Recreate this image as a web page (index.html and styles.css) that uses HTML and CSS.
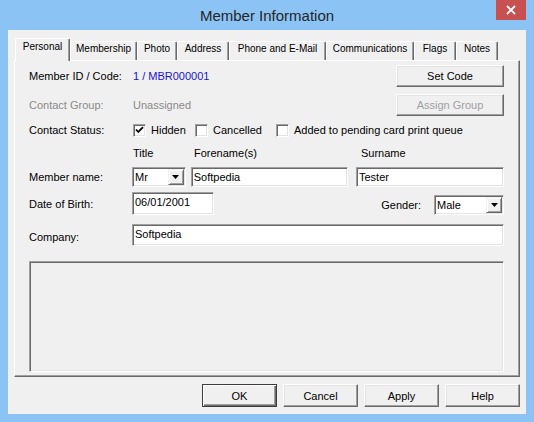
FILE: index.html
```html
<!DOCTYPE html>
<html lang="en">
<head>
    <meta charset="UTF-8">
    <title>Member Information</title>
    <link rel="stylesheet" href="styles.css">
</head>
<body>
    <div class="window">
        <div class="titlebar">
            <span class="titlebar__text">Member Information</span>
            <button class="titlebar__close" aria-label="Close">
                <svg width="10" height="10" viewBox="0 0 10 10"><path d="M1 1L9 9M9 1L1 9" stroke="#fff" stroke-width="1.8"/></svg>
            </button>
        </div>

        <div class="client">
            <div class="tabs">
                <div class="tab tab--active">Personal</div>
                <div class="tab">Membership</div>
                <div class="tab">Photo</div>
                <div class="tab">Address</div>
                <div class="tab">Phone and E-Mail</div>
                <div class="tab">Communications</div>
                <div class="tab">Flags</div>
                <div class="tab">Notes</div>
            </div>

            <div class="panel">
                <div class="row row--code">
                    <span class="label">Member ID / Code:</span>
                    <span class="value value--link">1 / MBR000001</span>
                    <button class="btn btn--side">Set Code</button>
                </div>

                <div class="row row--group">
                    <span class="label label--disabled">Contact Group:</span>
                    <span class="value value--disabled">Unassigned</span>
                    <button class="btn btn--side" disabled>Assign Group</button>
                </div>

                <div class="row row--status">
                    <span class="label">Contact Status:</span>
                    <label class="check check--hidden">
                        <span class="check__box">
                            <svg width="9" height="9" viewBox="0 0 9 9"><path d="M1 3.5L3.3 6L8 1.2" fill="none" stroke="#000" stroke-width="1.8"/></svg>
                        </span>
                        Hidden
                    </label>
                    <label class="check check--cancelled">
                        <span class="check__box"></span>
                        Cancelled
                    </label>
                    <label class="check">
                        <span class="check__box"></span>
                        Added to pending card print queue
                    </label>
                </div>

                <div class="row row--heads">
                    <span class="label"></span>
                    <span class="head head--title">Title</span>
                    <span class="head head--fore">Forename(s)</span>
                    <span class="head head--sur">Surname</span>
                </div>

                <div class="row row--name">
                    <span class="label">Member name:</span>
                    <div class="combo combo--title">
                        <span class="combo__value">Mr</span>
                        <span class="combo__btn">
                            <svg width="7" height="4" viewBox="0 0 7 4"><path d="M0 0H7L3.5 4Z"/></svg>
                        </span>
                    </div>
                    <input class="field field--fore" type="text" value="Softpedia">
                    <input class="field field--sur" type="text" value="Tester">
                </div>

                <div class="row row--dob">
                    <span class="label">Date of Birth:</span>
                    <input class="field field--date" type="text" value="06/01/2001">
                    <div class="gender">
                        <span class="gender__label">Gender:</span>
                        <div class="combo combo--gender">
                            <span class="combo__value">Male</span>
                            <span class="combo__btn">
                                <svg width="7" height="4" viewBox="0 0 7 4"><path d="M0 0H7L3.5 4Z"/></svg>
                            </span>
                        </div>
                    </div>
                </div>

                <div class="row row--company">
                    <span class="label label--company">Company:</span>
                    <input class="field field--company" type="text" value="Softpedia">
                </div>

                <div class="notes-box"></div>
            </div>

            <div class="actions">
                <button class="btn btn--action btn--default">OK</button>
                <button class="btn btn--action">Cancel</button>
                <button class="btn btn--action">Apply</button>
                <button class="btn btn--action">Help</button>
            </div>
        </div>
    </div>
</body>
</html>
```

FILE: styles.css
```css
* {
    margin: 0;
    padding: 0;
    box-sizing: border-box;
}

body {
    background-color: #8bc4f4;
    font-family: "Liberation Sans", Arial, sans-serif;
    font-size: 11px;
    color: #000;
}

.window {
    width: 534px;
    height: 422px;
    background-color: #8bc4f4;
    padding: 0 8px 8px;
}

/* Title bar */
.titlebar {
    height: 30px;
    display: grid;
    grid-template-columns: 1fr auto 1fr;
    align-items: start;
}

.titlebar__text {
    grid-column: 2;
    font-size: 15px;
    line-height: 31px;
    color: #262626;
}

.titlebar__close {
    grid-column: 3;
    justify-self: end;
    width: 30px;
    height: 20px;
    border: 0;
    background-color: #c75050;
    display: flex;
    justify-content: center;
    align-items: center;
}

/* Client area */
.client {
    height: 384px;
    background-color: #f0f0f0;
    padding: 8px 6px 0;
}

.tabs {
    display: flex;
    align-items: flex-end;
    height: 22px;
    padding-left: 1px;
    position: relative;
    z-index: 1;
}

.tab {
    height: 19px;
    border: 1px solid #fff;
    border-bottom: 0;
    border-right-color: #696969;
    border-radius: 2px 2px 0 0;
    box-shadow: inset -1px 0 #a0a0a0;
    background-color: #f0f0f0;
    font-size: 10px;
    line-height: 14px;
    text-align: center;
    white-space: nowrap;
}

.tab--active {
    height: 23px;
    margin-bottom: -1px;
    padding-top: 1px;
}

.tab:nth-child(1) { width: 55px; }
.tab:nth-child(2) { width: 67px; }
.tab:nth-child(3) { width: 40px; }
.tab:nth-child(4) { width: 52px; }
.tab:nth-child(5) { width: 97px; }
.tab:nth-child(6) { width: 88px; }
.tab:nth-child(7) { width: 42px; }
.tab:nth-child(8) { width: 42px; }

.panel {
    height: 317px;
    border: 1px solid;
    border-color: #fff #696969 #696969 #fff;
    box-shadow: inset -1px -1px #a0a0a0;
    padding: 4px 15px 4px 14px;
    display: flex;
    flex-direction: column;
}

/* Form rows */
.row {
    display: flex;
    align-items: center;
    flex: none;
}

.row--code { height: 22px; }
.row--group { height: 22px; margin-top: 7px; }
.row--status { height: 20px; margin-top: 4px; }
.row--heads { height: 14px; margin-top: 6px; }
.row--name { height: 20px; margin-top: 7px; }
.row--dob { height: 23px; margin-top: 5px; }
.row--company { height: 22px; margin-top: 9px; }

.label {
    width: 103px;
    flex: none;
}

.label--disabled,
.value--disabled {
    color: #8a8a8a;
}

.label--company {
    padding-top: 3px;
}

.value {
    padding-left: 1px;
}

.value--link {
    color: #1414d2;
}

/* Buttons */
.btn {
    font: inherit;
    color: #000;
    background-color: #f0f0f0;
    border: 1px solid;
    border-color: #fff #696969 #696969 #fff;
    box-shadow: inset -1px -1px #a0a0a0, inset 1px 1px #e3e3e3;
}

.btn:disabled {
    color: #a0a0a0;
}

.btn--side {
    width: 108px;
    height: 22px;
    margin-left: auto;
}

.btn--action {
    width: 75px;
    height: 23px;
}

.btn--default {
    border-color: #3c3c3c;
    box-shadow: inset 1px 1px #fff, inset -1px -1px #696969, inset -2px -2px #a0a0a0;
}

/* Checkboxes */
.check {
    display: flex;
    align-items: center;
    gap: 5px;
    margin-left: 1px;
    white-space: nowrap;
}

.check + .check {
    margin-left: 0;
}

.check--hidden { width: 62px; }
.check--cancelled { width: 81px; }

.check__box {
    width: 13px;
    height: 13px;
    flex: none;
    background-color: #fff;
    border: 1px solid;
    border-color: #a0a0a0 #fff #fff #a0a0a0;
    box-shadow: inset 1px 1px #696969, inset -1px -1px #e3e3e3;
    display: flex;
    justify-content: center;
    align-items: center;
}

/* Column headings */
.head--title { width: 59px; padding-left: 1px; }
.head--fore { width: 166px; padding-left: 3px; }
.head--sur { padding-left: 4px; }

/* Text fields */
.field {
    font: inherit;
    color: #000;
    height: 100%;
    background-color: #fff;
    border: 1px solid;
    border-color: #a0a0a0 #fff #fff #a0a0a0;
    box-shadow: inset 1px 1px #696969, inset -1px -1px #e3e3e3;
    padding: 0 2px;
    outline: none;
}

.field--fore { width: 158px; margin-left: 5px; }
.field--sur { flex: 1; margin-left: 8px; }
.field--date { width: 82px; padding-bottom: 4px; }
.field--company { flex: 1; padding-bottom: 2px; }

/* Combo boxes */
.combo {
    height: 20px;
    display: flex;
    background-color: #fff;
    border: 1px solid;
    border-color: #a0a0a0 #fff #fff #a0a0a0;
    box-shadow: inset 1px 1px #696969, inset -1px -1px #e3e3e3;
    padding: 1px;
}

.combo--title { width: 54px; }
.combo--gender { width: 70px; }

.combo__value {
    flex: 1;
    padding-left: 1px;
    line-height: 16px;
}

.combo__btn {
    width: 16px;
    height: 16px;
    background-color: #f0f0f0;
    border: 1px solid;
    border-color: #f0f0f0 #696969 #696969 #f0f0f0;
    box-shadow: inset 1px 1px #fff, inset -1px -1px #a0a0a0;
    display: flex;
    justify-content: center;
    align-items: center;
}

.gender {
    margin-left: auto;
    align-self: flex-end;
    display: flex;
    align-items: center;
}

.gender__label {
    margin-right: 13px;
}

.notes-box {
    height: 111px;
    margin-top: 15px;
    flex: none;
    border: 1px solid;
    border-color: #a0a0a0 #fff #fff #a0a0a0;
    box-shadow: inset 1px 1px #696969, inset -1px -1px #e3e3e3;
}

.actions {
    display: flex;
    justify-content: flex-end;
    gap: 6px;
    margin-top: 7px;
}
```
